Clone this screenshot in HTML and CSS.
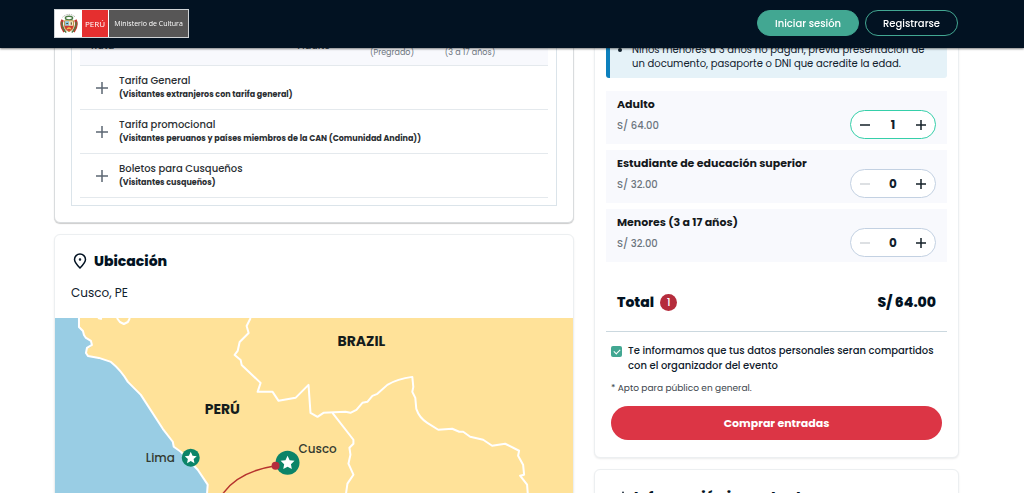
FILE: index.html
```html
<!DOCTYPE html>
<html lang="es">
<head>
    <meta charset="UTF-8">
    <meta name="viewport" content="width=device-width, initial-scale=1.0">
    <title>Boletos - Ministerio de Cultura</title>
    <link rel="stylesheet" href="styles.css">
</head>
<body>

    <header class="navbar">
        <a href="#" class="logo">
            <span class="logo-shield">
                <svg viewBox="0 0 22 24">
                    <path d="M4 5Q11-1 18 5" fill="none" stroke="#8b8f86" stroke-width="1" stroke-dasharray="1 1"/>
                    <path d="M4 8Q1 14 6 21M18 8Q21 14 16 21" fill="none" stroke="#c5352c" stroke-width="3"/>
                    <path d="M3 10Q3 17 8 22M19 10Q19 17 14 22" fill="none" stroke="#4d7c45" stroke-width="1.5"/>
                    <ellipse cx="11" cy="6" rx="4" ry="2" fill="none" stroke="#4d7c45" stroke-width="1.5"/>
                    <path d="M6 9h10v6q0 4-5 6q-5-2-5-6z" fill="#f4e9c6" stroke="#b98b32"/>
                    <path d="M6.500 9.500H11v5H6.500z" fill="#8cc5dd"/>
                    <path d="M6.500 14.500h9v1q0 3-4.500 5q-4.500-2-4.500-5z" fill="#cf3b32"/>
                    <path d="M13.500 10.500v3M8 12h2" stroke="#5b4a2b" stroke-width="1.200"/>
                    <path d="M9 18q2-2 4 0" fill="none" stroke="#f2c84b" stroke-width="1.500"/>
                </svg>
            </span>
            <span class="logo-peru">PERÚ</span>
            <span class="logo-name">Ministerio de Cultura</span>
        </a>
        <nav class="navbar-actions">
            <button class="btn btn-login">Iniciar sesión</button>
            <button class="btn btn-register">Registrarse</button>
        </nav>
    </header>

    <main class="layout">

        <div class="column">
            <section class="card card-rates">
                <div class="rates-box">
                    <table class="rates">
                        <thead>
                            <tr>
                                <th class="col-route">Ruta</th>
                                <th>Adulto</th>
                                <th>Estudiante<br><small>(Pregrado)</small></th>
                                <th>Menores<br><small>(3 a 17 años)</small></th>
                                <th class="col-end"></th>
                            </tr>
                        </thead>
                        <tbody>
                            <tr>
                                <td colspan="5">
                                    <div class="rate">
                                        <svg class="rate-plus" viewBox="0 0 12 12"><path d="M6 0v12M0 6h12"/></svg>
                                        <div>
                                            <div class="rate-name">Tarifa General</div>
                                            <div class="rate-detail">(Visitantes extranjeros con tarifa general)</div>
                                        </div>
                                    </div>
                                </td>
                            </tr>
                            <tr>
                                <td colspan="5">
                                    <div class="rate">
                                        <svg class="rate-plus" viewBox="0 0 12 12"><path d="M6 0v12M0 6h12"/></svg>
                                        <div>
                                            <div class="rate-name">Tarifa promocional</div>
                                            <div class="rate-detail">(Visitantes peruanos y países miembros de la CAN (Comunidad Andina))</div>
                                        </div>
                                    </div>
                                </td>
                            </tr>
                            <tr>
                                <td colspan="5">
                                    <div class="rate">
                                        <svg class="rate-plus" viewBox="0 0 12 12"><path d="M6 0v12M0 6h12"/></svg>
                                        <div>
                                            <div class="rate-name">Boletos para Cusqueños</div>
                                            <div class="rate-detail">(Visitantes cusqueños)</div>
                                        </div>
                                    </div>
                                </td>
                            </tr>
                        </tbody>
                    </table>
                </div>
            </section>

            <section class="card card-location">
                <h2 class="card-title">
                    <svg class="title-icon" viewBox="0 0 18 18"><path d="M9 16C6 13 3.500 10.500 3.500 7.500a5.500 5.500 0 0 1 11 0C14.500 10.500 12 13 9 16z"/><circle cx="9" cy="7.500" r=".5"/></svg>
                    Ubicación
                </h2>
                <p class="place">Cusco, PE</p>
                <svg class="map" viewBox="0 0 519 260">
                    <rect width="519" height="260" fill="#ffe299"/>
                    <!-- Océano -->
                    <path fill="#99cde4" d="M0 0H24V9L28 13L29 17L37 25L36 29L31 31L32 37L56 44Q66 52 73 64L86 77L108 111L118 124L119 129L126 134L143 152L153 167L152 180L160 260H0z"/>
                    <!-- Fronteras -->
                    <g fill="none" stroke="#fff" stroke-width="2" stroke-linejoin="round">
                        <path d="M24 0V9L28 13L29 17L31 20L36 23L37 27L32 30L31 35L33 38L44 40L56 44Q66 52 73 64L86 77L108 111L118 124L119 129L126 134L143 152L153 167L152 180L160 260"/>
                        <path d="M43 0L47 1M62 0L65 4L69 6L73 4L75 0"/>
                        <path d="M196 0L192 8L194 15L185 24L183 33L180 37L186 42L187 47L206 65L203 74L218 74L224 83L241 80L254 67L256 95L263 99L269 95L291 94L296 95L302 92L308 85L313 84L318 78L323 76L333 67Q343 61 358 59L359 69L358 74L361 80L362 91Q365 100 373 105L384 112L398 111L405 114L409 114L416 119L429 122L438 128L451 126L465 133L464 138L469 147L470 157L466 158L473 167L474 180L480 260"/>
                        <path d="M278 95L299 122L299 126L295 130L296 137L294 146L299 157L293 166L291 180L288 260"/>
                    </g>
                    <path d="M169 175Q184 154 221 148M169 175L140 210" fill="none" stroke="#b6332e" stroke-width="1.500"/>
                    <circle cx="136" cy="140" r="9" fill="#0c8468"/>
                    <path fill="#fff" d="M136 134l1.800 3.900 4.200.5-3.100 2.900.8 4.200-3.700-2.100-3.700 2.100.8-4.200-3.100-2.900 4.200-.5z"/>
                    <circle cx="233" cy="145" r="12" fill="#0c8468"/>
                    <path fill="#fff" d="M233 138l2.100 4.500 4.900.6-3.600 3.400.9 4.900-4.300-2.400-4.300 2.400.9-4.900-3.600-3.400 4.900-.6z"/>
                    <circle cx="221" cy="148" r="4" fill="#b52c3c"/>
                    <text class="map-country" x="283" y="28">BRAZIL</text>
                    <text class="map-country" x="150" y="96">PERÚ</text>
                    <text class="map-city" x="91" y="144">Lima</text>
                    <text class="map-city" x="244" y="135">Cusco</text>
                </svg>
            </section>
        </div>

        <div class="column">
            <section class="card card-buy">
                <ul class="notice">
                    <li>Niños menores a 3 años no pagan, previa presentación de un documento, pasaporte o DNI que acredite la edad.</li>
                </ul>

                <div class="tickets">
                    <div class="ticket">
                        <div>
                            <h3 class="ticket-name">Adulto</h3>
                            <p class="ticket-price">S/ 64.00</p>
                        </div>
                        <div class="stepper stepper-active">
                            <button aria-label="Quitar"><svg viewBox="0 0 10 10"><path d="M0 5h10"/></svg></button>
                            <output>1</output>
                            <button aria-label="Agregar"><svg viewBox="0 0 10 10"><path d="M0 5h10M5 0v10"/></svg></button>
                        </div>
                    </div>
                    <div class="ticket">
                        <div>
                            <h3 class="ticket-name">Estudiante de educación superior</h3>
                            <p class="ticket-price">S/ 32.00</p>
                        </div>
                        <div class="stepper">
                            <button aria-label="Quitar" disabled><svg viewBox="0 0 10 10"><path d="M0 5h10"/></svg></button>
                            <output>0</output>
                            <button aria-label="Agregar"><svg viewBox="0 0 10 10"><path d="M0 5h10M5 0v10"/></svg></button>
                        </div>
                    </div>
                    <div class="ticket">
                        <div>
                            <h3 class="ticket-name">Menores (3 a 17 años)</h3>
                            <p class="ticket-price">S/ 32.00</p>
                        </div>
                        <div class="stepper">
                            <button aria-label="Quitar" disabled><svg viewBox="0 0 10 10"><path d="M0 5h10"/></svg></button>
                            <output>0</output>
                            <button aria-label="Agregar"><svg viewBox="0 0 10 10"><path d="M0 5h10M5 0v10"/></svg></button>
                        </div>
                    </div>
                </div>

                <div class="total">
                    <span>Total</span>
                    <span class="total-count">1</span>
                    <span class="total-amount">S/ 64.00</span>
                </div>

                <div class="checkout">
                    <label class="consent">
                        <input type="checkbox" checked>
                        <span>Te informamos que tus datos personales seran compartidos con el organizador del evento</span>
                    </label>
                    <p class="audience">* Apto para público en general.</p>
                    <button class="btn-buy">Comprar entradas</button>
                </div>
            </section>

            <section class="card card-info">
                <h2 class="card-title">
                    <svg class="info-icon" viewBox="0 0 12 14"><path d="M6 1l2 4 3 1-2 3 .500 4L6 11l-3.500 2L3 9 1 6l3-1z"/></svg>
                    Información importante
                </h2>
            </section>
        </div>

    </main>

</body>
</html>
```
FILE: styles.css
```css
:root {
    --navy: #021222;
    --green: #42a792;
    --red: #dc3545;
    --text: #10202c;
    --muted: #6c757d;
    --line: #e4e9ed;
    --soft: #f8f9fd;
}

* {
    margin: 0;
    padding: 0;
    box-sizing: border-box;
}

body {
    height: 100vh;
    overflow: hidden;
    font-family: 'Poppins', 'Inter', sans-serif;
    font-size: 10px;
    line-height: 15px;
    color: var(--text);
    background: #fff;
}

button {
    font: inherit;
    cursor: pointer;
}

/* --- Barra superior --- */
.navbar {
    position: fixed;
    top: 0;
    left: 0;
    right: 0;
    z-index: 10;
    height: 48px;
    padding: 0 66px 2px 54px;
    display: flex;
    justify-content: space-between;
    align-items: center;
    background: var(--navy);
    box-shadow: 0 1px 2px rgba(0, 0, 0, 0.5);
}
.logo {
    display: flex;
    height: 29px;
    border: 1px solid #cfd3d6;
    background: #fff;
    color: #fff;
    font-family: 'Open Sans', sans-serif;
    font-size: 8px;
    text-decoration: none;
}
.logo span {
    display: flex;
    align-items: center;
    justify-content: center;
}
.logo-shield { width: 27px; }
.logo-shield svg { width: 20px; height: 23px; }
.logo-peru {
    width: 26px;
    background: #e52f2f;
}
.logo-name {
    width: 79px;
    margin-left: 1px;
    background: #575656;
    font-size: 7px;
}
.navbar-actions {
    display: flex;
    align-items: center;
    gap: 6px;
}
.btn {
    height: 26px;
    padding: 0 17px;
    border: 1px solid var(--green);
    border-radius: 13px;
    color: #fff;
    font-weight: 500;
}
.btn-login { background: var(--green); }
.btn-register { background: transparent; }

/* --- Columnas y tarjetas --- */
.layout {
    display: grid;
    grid-template-columns: 1fr 365px;
    gap: 20px;
    align-items: start;
    padding: 0 65px 0 54px;
}
.column {
    display: flex;
    flex-direction: column;
    gap: 11px;
}
.card {
    border: 1px solid #eceff1;
    border-radius: 6px;
    background: #fff;
    box-shadow: 0 1px 2px rgba(0, 0, 0, 0.08);
}
.card-title {
    display: flex;
    align-items: center;
    gap: 5px;
    font-size: 14px;
    line-height: 20px;
    font-weight: 800;
    color: var(--navy);
}
.title-icon {
    width: 18px;
    height: 18px;
    fill: none;
    stroke: currentColor;
    stroke-width: 1.5;
}

/* --- Tarifas --- */
.card-rates {
    padding: 16px;
    border-color: #d9dcde;
    box-shadow: 0 1px 1px rgba(0, 0, 0, 0.2);
}
.rates-box {
    padding: 8px 8px 7px;
    border: 1px solid #dbe4ea;
}
.rates {
    width: 100%;
    table-layout: fixed;
    border-collapse: separate;
    border-spacing: 0;
}
.rates th {
    width: 78px;
    padding: 5px 0;
    background: var(--soft);
    border-bottom: 1px solid var(--line);
    color: #44505a;
    font-weight: 500;
    line-height: 14px;
}
.rates .col-route {
    width: auto;
    padding-left: 11px;
    text-align: left;
}
.rates .col-end { width: 39px; }
.rates small {
    font-size: 8px;
    font-weight: 400;
    color: var(--muted);
}
.rates td { border-bottom: 1px solid var(--line); }
.rate {
    display: flex;
    align-items: center;
    gap: 11px;
    height: 43px;
    padding: 0 16px;
    color: #2b2f33;
}
.rate-plus {
    width: 12px;
    height: 12px;
    stroke: #5c6773;
    stroke-width: 1.5;
}
.rate-name {
    line-height: 14px;
    font-weight: 500;
}
.rate-detail {
    font-size: 8px;
    line-height: 13px;
    font-weight: 700;
}

/* --- Ubicación --- */
.card-location {
    padding-top: 16px;
    overflow: hidden;
}
.card-location .card-title,
.place { padding: 0 16px; }
.place {
    margin: 14px 0 18px;
    font-size: 12px;
}
.map {
    display: block;
    width: 100%;
}
.map-country {
    font-size: 14px;
    font-weight: 700;
    fill: #151c1c;
}
.map-city {
    font-size: 12px;
    font-weight: 500;
    fill: #333a30;
}

/* --- Compra --- */
.card-buy { padding: 16px 11px 17px; }
.notice {
    padding: 26px 16px 7px 22px;
    border-left: 4px solid #0d80bd;
    border-radius: 3px;
    background: #e5f2f8;
    line-height: 14px;
}
.tickets {
    display: flex;
    flex-direction: column;
    gap: 6px;
    margin-top: 13px;
}
.ticket {
    display: flex;
    justify-content: space-between;
    align-items: flex-end;
    padding: 5px 11px;
    background: var(--soft);
}
.ticket-name {
    font-size: 11px;
    line-height: 16px;
    font-weight: 700;
    color: #15191c;
}
.ticket-price {
    margin: 5px 0;
    line-height: 17px;
    font-weight: 500;
    color: var(--muted);
}
.stepper {
    display: flex;
    align-items: center;
    justify-content: space-between;
    width: 86px;
    height: 29px;
    padding: 0 4px;
    border: 1px solid #c3d1e2;
    border-radius: 15px;
    background: #fff;
}
.stepper-active { border-color: #35cfa9; }
.stepper button {
    display: flex;
    justify-content: center;
    width: 20px;
    border: 0;
    background: none;
    color: #152029;
}
.stepper button:disabled { color: #d2d6da; }
.stepper svg {
    width: 10px;
    height: 10px;
    stroke: currentColor;
    stroke-width: 1.5;
}
.stepper output {
    font-size: 12px;
    font-weight: 700;
}
.total {
    display: flex;
    align-items: center;
    gap: 6px;
    padding: 30px 11px 19px;
    border-bottom: 1px solid #cbd8df;
    font-size: 14px;
    line-height: 20px;
    font-weight: 800;
    color: var(--navy);
}
.total-count {
    width: 17px;
    height: 17px;
    border-radius: 50%;
    background: #b52c3c;
    color: #fff;
    font-size: 11px;
    line-height: 17px;
    font-weight: 500;
    text-align: center;
}
.total-amount { margin-left: auto; }
.checkout { padding: 11px 5px 0; }
.consent {
    display: flex;
    align-items: flex-start;
    gap: 6px;
    font-weight: 500;
}
.consent input {
    appearance: none;
    flex: none;
    display: flex;
    justify-content: center;
    width: 11px;
    height: 11px;
    margin-top: 3px;
    border-radius: 2px;
    background: var(--green);
}
.consent input:checked::before {
    content: '';
    width: 3px;
    height: 5px;
    margin-top: 2px;
    border: solid #fff;
    border-width: 0 1px 1px 0;
    transform: rotate(45deg);
}
.audience {
    margin: 8px 0 10px;
    font-size: 9px;
    color: #3c454c;
}
.btn-buy {
    width: 100%;
    height: 34px;
    border: 0;
    border-radius: 17px;
    background: var(--red);
    color: #fff;
    font-size: 11px;
    font-weight: 700;
}

/* --- Información --- */
.card-info { padding: 17px 22px; }
.info-icon {
    width: 12px;
    height: 14px;
    fill: currentColor;
}
```
